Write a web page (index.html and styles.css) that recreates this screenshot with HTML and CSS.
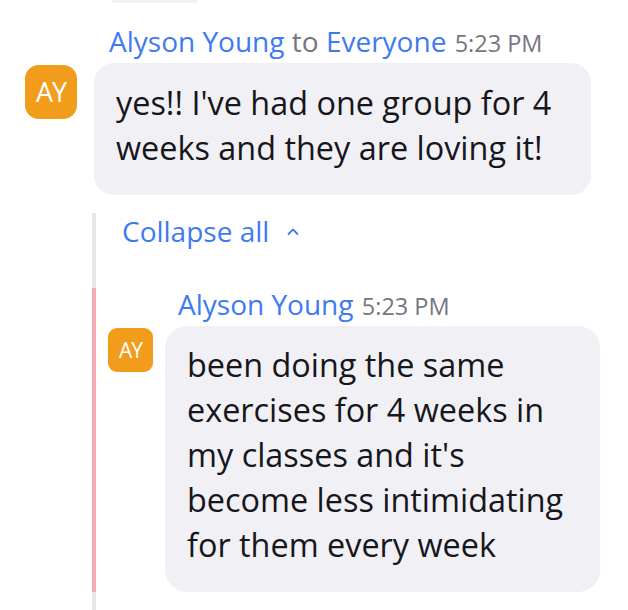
FILE: index.html
```html
<!DOCTYPE html>
<html lang="en">
<head>
<meta charset="UTF-8" />
<title>Chat</title>
<link rel="stylesheet" href="styles.css">
</head>
<body>
<div class="chat">
  <div class="prev-tail"></div>

  <div class="msg">
    <div class="msg-head">
      <span class="name">Alyson Young</span>
      <span class="to">to</span>
      <span class="name">Everyone</span>
      <span class="time">5:23 PM</span>
    </div>
    <div class="msg-row">
      <div class="avatar">AY</div>
      <div class="bubble">yes!! I've had one group for 4 weeks and they are loving it!</div>
    </div>
  </div>

  <div class="thread">
    <div class="collapse">
      Collapse all
      <svg class="caret" width="14" height="9" viewBox="0 0 14 9"><path d="M2 7.5 L7 2.5 L12 7.5" fill="none" stroke="#3f7af3" stroke-width="1.8"/></svg>
    </div>
    <div class="reply">
      <div class="reply-head">
        <span class="name">Alyson Young</span>
        <span class="time">5:23 PM</span>
      </div>
      <div class="reply-row">
        <div class="avatar small">AY</div>
        <div class="bubble reply-bubble">been doing the same exercises for 4 weeks in my classes and it's become less intimidating for them every week</div>
      </div>
    </div>
    <div class="thread-rest"></div>
  </div>
</div>
</body>
</html>
```

FILE: styles.css
```css
* {
  box-sizing: border-box;
}
body {
  margin: 0;
  background: #fff;
  font-family: 'Open Sans', 'Noto Sans', sans-serif;
  color: #16161c;
}
.chat {
  width: 628px;
}
.prev-tail {
  margin-left: 112px;
  width: 86px;
  height: 3px;
  background: #f0f0f5;
  border-radius: 0 0 8px 8px;
}

/* message header */
.msg-head,
.reply-head {
  font-size: 28px;
  line-height: 32px;
  white-space: nowrap;
}
.msg-head {
  margin: 22px 0 4px 109px;
}
.name {
  color: #3f7af3;
}
.to {
  color: #74747c;
}
.time {
  color: #76767f;
  font-size: 23.5px;
  margin-left: 1px;
}

.msg-row {
  display: flex;
  align-items: flex-start;
  gap: 17px;
  padding-left: 25px;
}
.avatar {
  flex: none;
  width: 52px;
  height: 54px;
  margin-top: 2px;
  border-radius: 14px;
  background: #f29c1c;
  color: #fff;
  font-size: 27px;
  line-height: 54px;
  text-align: center;
  letter-spacing: -1px;
}
.bubble {
  width: 497px;
  background: #f0f0f5;
  border-radius: 20px;
  padding: 17px 22px 25px;
  font-size: 32.4px;
  line-height: 45px;
}

/* thread */
.thread {
  margin: 18px 0 0 92px;
}
.collapse {
  border-left: 4px solid #e6e6ec;
  padding: 2px 0 0 26px;
  height: 75px;
  color: #3f7af3;
  font-size: 28px;
  line-height: 32px;
}
.caret {
  margin-left: 9px;
  vertical-align: 6px;
}
.reply {
  border-left: 4px solid #f5aab1;
}
.reply-head {
  margin: 0 0 4px 82px;
}
.reply-row {
  display: flex;
  align-items: flex-start;
  gap: 12px;
  padding-left: 12px;
}
.avatar.small {
  width: 45px;
  height: 44px;
  border-radius: 9px;
  font-size: 21px;
  line-height: 44px;
}
.reply-bubble {
  width: 435px;
  border-radius: 22px;
  padding: 16px 22px 25px;
}
.thread-rest {
  border-left: 4px solid #e6e6ec;
  height: 30px;
}
```
